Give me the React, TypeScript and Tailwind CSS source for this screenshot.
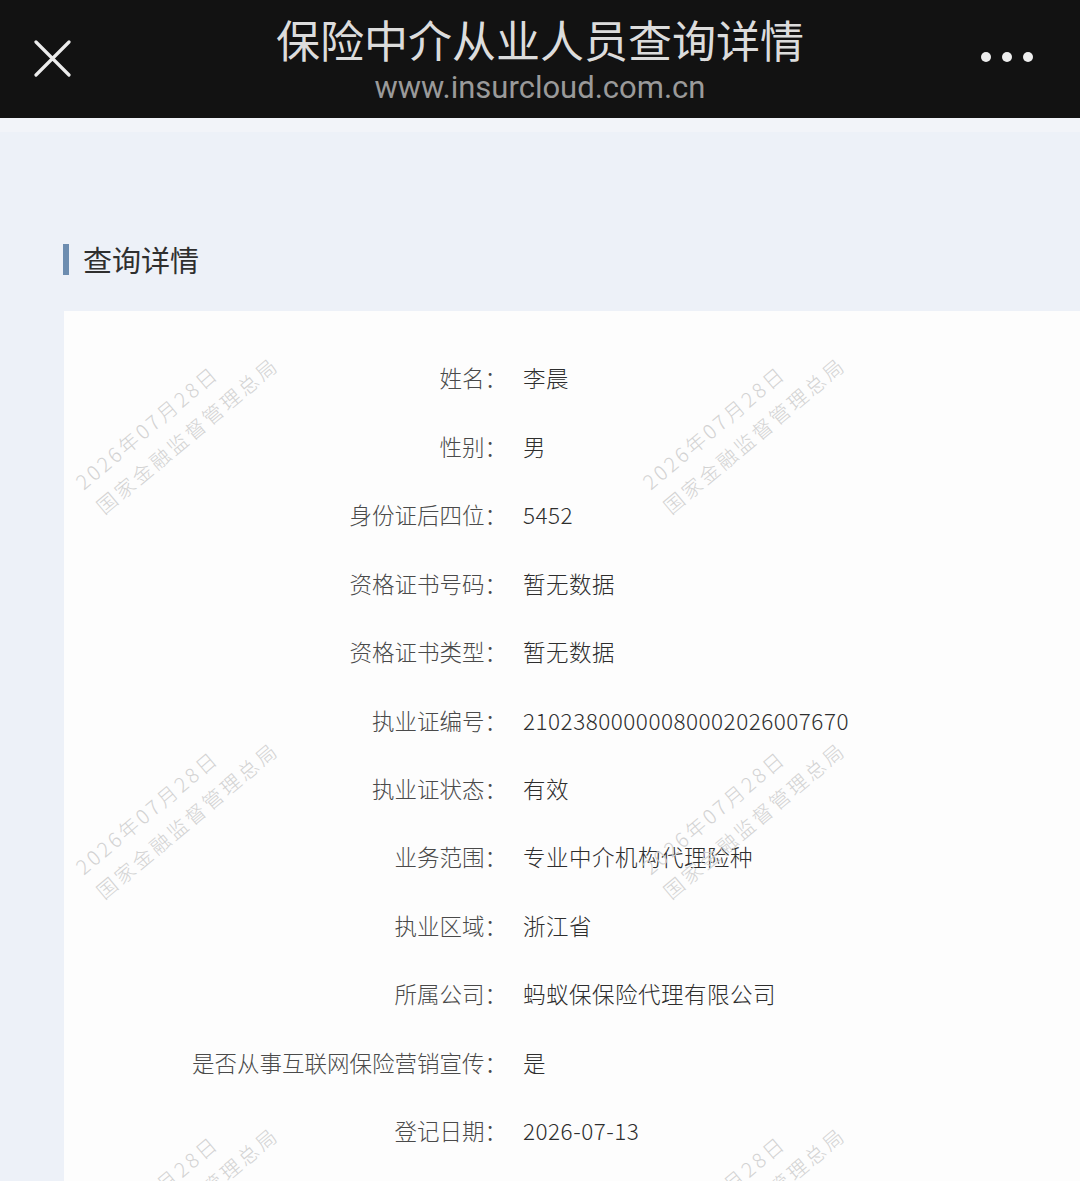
const rows: Array<[string, string]> = [
  ['姓名', '李晨'],
  ['性别', '男'],
  ['身份证后四位', '5452'],
  ['资格证书号码', '暂无数据'],
  ['资格证书类型', '暂无数据'],
  ['执业证编号', '21023800000080002026007670'],
  ['执业证状态', '有效'],
  ['业务范围', '专业中介机构代理险种'],
  ['执业区域', '浙江省'],
  ['所属公司', '蚂蚁保保险代理有限公司'],
  ['是否从事互联网保险营销宣传', '是'],
  ['登记日期', '2026-07-13'],
];

// watermark centres, relative to the card
const marks = [
  'left-[113px] top-[112px]',
  'left-[680px] top-[112px]',
  'left-[113px] top-[497px]',
  'left-[680px] top-[497px]',
  'left-[113px] top-[882px]',
  'left-[680px] top-[882px]',
];

const Watermark = ({ pos }: { pos: string }) => (
  <div
    className={`pointer-events-none absolute ${pos} -translate-x-1/2 -translate-y-1/2 -rotate-[40deg] whitespace-nowrap text-left text-[20px] font-light leading-[32px] tracking-[3px] text-[#d2d2d2]`}
  >
    <div>2026年07月28日</div>
    <div>国家金融监督管理总局</div>
  </div>
);

const Header = () => (
  <div className="flex h-[118px] items-start bg-[#121212]">
    <div className="flex w-[140px] pl-[34px] pt-[40px]">
      <svg width="37" height="37" viewBox="0 0 37 37" fill="none" stroke="#ececec" strokeWidth="3.2" strokeLinecap="round">
        <path d="M2 2 L35 35 M35 2 L2 35" />
      </svg>
    </div>
    <div className="flex flex-1 flex-col items-center pt-[17px]">
      <div className="text-[44px] leading-none font-normal text-[#dcdcdc]">保险中介从业人员查询详情</div>
      <div className="mt-[11px] font-['Roboto',sans-serif] text-[31px] leading-none text-[#9a9a9a]">www.insurcloud.com.cn</div>
    </div>
    <div className="flex w-[140px] justify-end gap-[11px] pr-[47px] pt-[52px]">
      <span className="h-[10px] w-[10px] rounded-full bg-[#eeeeee]" />
      <span className="h-[10px] w-[10px] rounded-full bg-[#eeeeee]" />
      <span className="h-[10px] w-[10px] rounded-full bg-[#eeeeee]" />
    </div>
  </div>
);

export default function App() {
  return (
    <div className="min-h-[1181px] overflow-hidden bg-[#edf1f8] font-['Noto_Sans_CJK_SC','Noto_Sans',sans-serif]">
      <Header />
      <div className="h-[14px] bg-[#f2f4f9]" />
      <div className="ml-[63px] mt-[112px] flex h-[31px] items-center gap-[14px]">
        <span className="h-[31px] w-[6px] bg-[#6d8db0]" />
        <span className="text-[29px] leading-none text-[#2f2f2f]">查询详情</span>
      </div>
      <div className="relative ml-[64px] mt-[36px] overflow-hidden bg-[#fdfdfd] pb-[40px] pt-[33px]">
        {rows.map(([label, value]) => (
          <div key={label} className="grid h-[68.45px] grid-cols-[443px_1fr] items-center gap-[16px] text-[22.5px] font-light">
            <span className="text-right text-[#4a4a4a]">{label}：</span>
            <span className="tracking-[0.5px] text-[#2e2e2e]">{value}</span>
          </div>
        ))}
        {marks.map(pos => (
          <Watermark key={pos} pos={pos} />
        ))}
      </div>
    </div>
  );
}
